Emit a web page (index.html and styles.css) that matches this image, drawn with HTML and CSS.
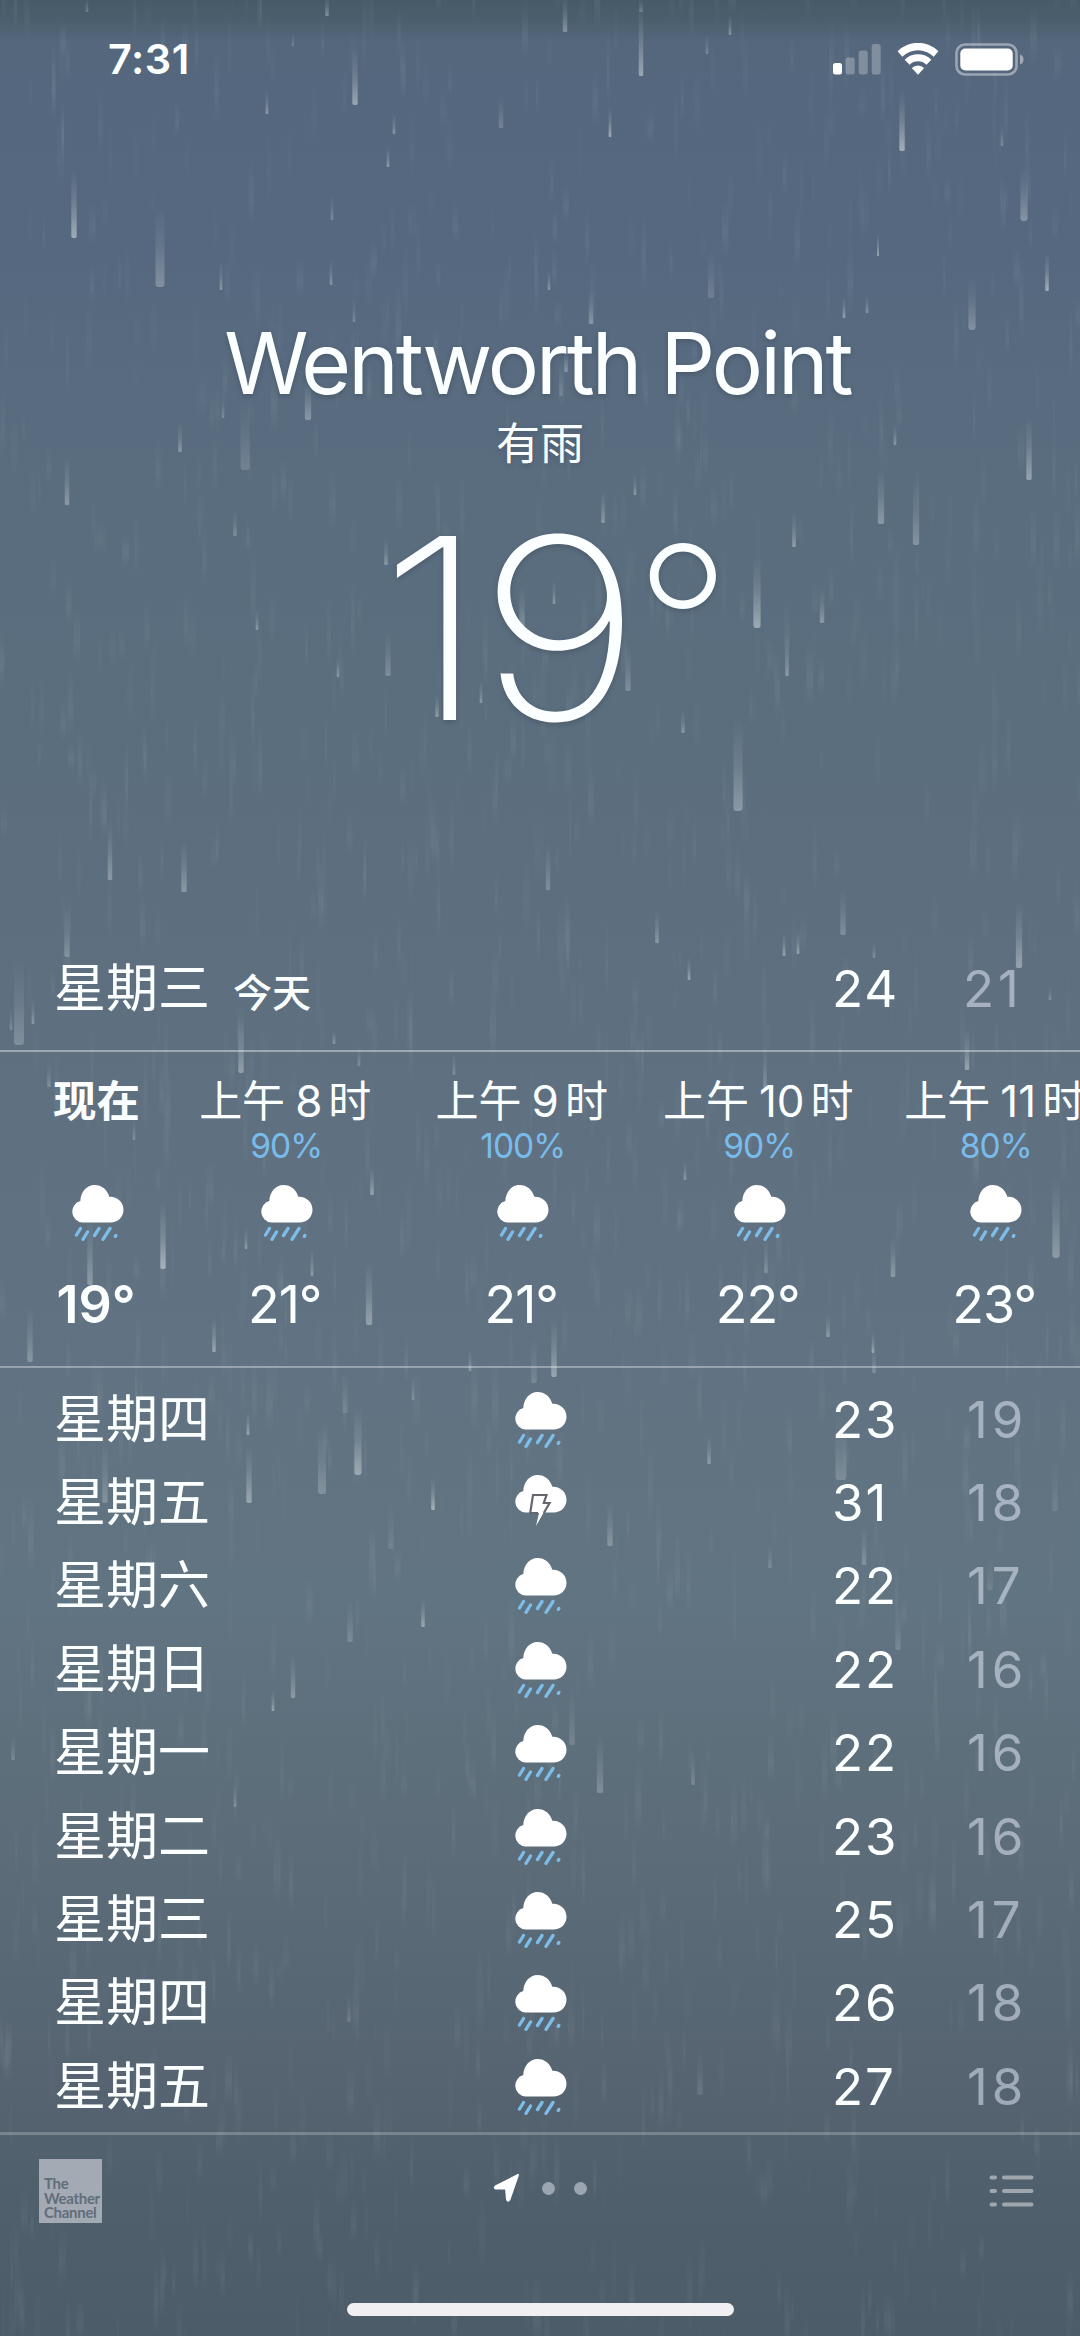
FILE: index.html
```html
<!DOCTYPE html>
<html lang="zh-CN">
<head>
<meta charset="utf-8">
<title>Wentworth Point</title>
<link rel="stylesheet" href="styles.css">
</head>
<body>
<svg class="defs" width="0" height="0" aria-hidden="true">
  <defs>
    <linearGradient id="streak" x1="0" y1="0" x2="0" y2="1">
      <stop offset="0" stop-color="#d0dade" stop-opacity="0"/>
      <stop offset=".5" stop-color="#d0dade" stop-opacity=".35"/>
      <stop offset="1" stop-color="#d0dade" stop-opacity="1"/>
    </linearGradient>
    <linearGradient id="mist" x1="0" y1="0" x2="0" y2="1">
      <stop offset="0" stop-color="#b4c4c8" stop-opacity="0"/>
      <stop offset=".6" stop-color="#b4c4c8" stop-opacity="1"/>
      <stop offset="1" stop-color="#b4c4c8" stop-opacity="0"/>
    </linearGradient>
    <g id="cloud">
      <path fill="#fff" d="M11.500 37.500A10.900 10.900 0 0 1 9.300 16.100C9.600 6.800 15.800 0 23.400 0C31 0 36.300 4.800 38.300 11.800C45.800 11.200 52.500 16.900 52.500 24.700C52.500 32 46.900 37.500 39.500 37.500Z"/>
    </g>
    <symbol id="rain" viewBox="0 0 53 56">
      <use href="#cloud"/>
      <g stroke="#7cbdea" stroke-width="3.300" stroke-linecap="round">
        <path d="M9.500 43.500L5.500 50M16.500 47L12 54.300M28 43.500L23.500 50.500M39 43.500L32 54.300M44.800 50.500L44.300 51.300"/>
      </g>
    </symbol>
    <symbol id="storm" viewBox="0 0 53 56">
      <use href="#cloud"/>
      <path fill="#fff" d="M19.500 20H32L29.500 28H35L22 51L25 38H16.500Z"/>
      <path fill="none" stroke="#66666f" stroke-width="2.200" d="M24 38H16.200L19 20H32.500L29.800 28H35.600L29.800 38"/>
    </symbol>
  </defs>
</svg>
<div class="screen">
  <svg class="rainfall" id="rainfall" viewBox="0 0 1080 2336" aria-hidden="true"></svg>

  <header class="status">
    <span class="clock">7:31</span>
    <div class="indicators">
      <svg class="signal" viewBox="0 0 48 32">
        <rect x="0" y="20" width="9" height="11.500" rx="2.500" fill="#fff"/>
        <g fill="#fff" fill-opacity=".26"><rect x="12.700" y="14.500" width="9" height="17" rx="2.500"/><rect x="25.700" y="7.500" width="9" height="24" rx="2.500"/><rect x="38.700" y="1" width="9" height="30.500" rx="2.500"/></g>
      </svg>
      <svg class="wifi" viewBox="0 0 42 32">
        <g fill="#fff">
          <path d="M.6 8.200A29 29 0 0 1 41.400 8.200L36.700 13.700A22.200 22.200 0 0 0 5.300 13.700Z"/>
          <path d="M7.700 16.700A18.800 18.800 0 0 1 34.300 16.700L29.500 21.700A12.200 12.200 0 0 0 12.500 21.700Z"/>
          <path d="M14.800 25A8.800 8.800 0 0 1 27.200 25L21 31.800Z"/>
        </g>
      </svg>
      <svg class="battery" viewBox="0 0 69 33">
        <rect x="1.500" y="1.500" width="60" height="30" rx="8.500" fill="none" stroke="#fff" stroke-opacity=".42" stroke-width="2.600"/>
        <rect x="5.300" y="5.500" width="52.400" height="22" rx="5" fill="#fff"/>
        <path d="M65 11.500Q68.500 12.500 68.500 16.500T65 21.500Z" fill="#fff" fill-opacity=".45"/>
      </svg>
    </div>
  </header>

  <section class="current">
    <h1 class="place">Wentworth Point</h1>
    <p class="condition">有雨</p>
    <p class="temperature"><span class="number">19</span><span class="unit">°</span></p>
  </section>

  <section class="today">
    <span class="day">星期三</span><span class="label">今天</span>
    <span class="high">24</span><span class="low">21</span>
  </section>

  <section class="hours">
    <div class="hour now"><span class="time">现在</span><span class="chance"></span><svg class="icon"><use href="#rain"/></svg><span class="degrees">19°</span></div>
    <div class="hour"><span class="time">上午<b>8</b>时</span><span class="chance">90%</span><svg class="icon"><use href="#rain"/></svg><span class="degrees">21°</span></div>
    <div class="hour"><span class="time">上午<b>9</b>时</span><span class="chance">100%</span><svg class="icon"><use href="#rain"/></svg><span class="degrees">21°</span></div>
    <div class="hour"><span class="time">上午<b>10</b>时</span><span class="chance">90%</span><svg class="icon"><use href="#rain"/></svg><span class="degrees">22°</span></div>
    <div class="hour"><span class="time">上午<b>11</b>时</span><span class="chance">80%</span><svg class="icon"><use href="#rain"/></svg><span class="degrees">23°</span></div>
  </section>

  <section class="days">
    <div class="row"><span class="day">星期四</span><svg class="icon"><use href="#rain"/></svg><span class="high">23</span><span class="low">19</span></div>
    <div class="row"><span class="day">星期五</span><svg class="icon"><use href="#storm"/></svg><span class="high">31</span><span class="low">18</span></div>
    <div class="row"><span class="day">星期六</span><svg class="icon"><use href="#rain"/></svg><span class="high">22</span><span class="low">17</span></div>
    <div class="row"><span class="day">星期日</span><svg class="icon"><use href="#rain"/></svg><span class="high">22</span><span class="low">16</span></div>
    <div class="row"><span class="day">星期一</span><svg class="icon"><use href="#rain"/></svg><span class="high">22</span><span class="low">16</span></div>
    <div class="row"><span class="day">星期二</span><svg class="icon"><use href="#rain"/></svg><span class="high">23</span><span class="low">16</span></div>
    <div class="row"><span class="day">星期三</span><svg class="icon"><use href="#rain"/></svg><span class="high">25</span><span class="low">17</span></div>
    <div class="row"><span class="day">星期四</span><svg class="icon"><use href="#rain"/></svg><span class="high">26</span><span class="low">18</span></div>
    <div class="row"><span class="day">星期五</span><svg class="icon"><use href="#rain"/></svg><span class="high">27</span><span class="low">18</span></div>
  </section>

  <footer class="toolbar">
    <div class="brand">The<br>Weather<br>Channel</div>
    <div class="pager">
      <svg class="arrow" viewBox="0 0 27 30"><path d="M25 2L2.500 13.500Q1 15 3 15.500H13L14 26.500Q15 29 16.500 26.500Z" fill="#fff" stroke="#fff" stroke-width="2" stroke-linejoin="round"/></svg>
      <i class="dot"></i><i class="dot"></i>
    </div>
    <svg class="list" viewBox="0 0 45 34"><g stroke="#fff" stroke-opacity=".45" stroke-width="4" stroke-linecap="round"><path d="M2.500 3.500h3.500M15 3.500h27.500M2.500 17h3.500M15 17h27.500M2.500 30.500h3.500M15 30.500h27.500"/></g></svg>
  </footer>
  <div class="home"></div>
</div>
<script src="rain.js"></script>
</body>
</html>
```
FILE: styles.css
```css
* { box-sizing: border-box; }
body, h1, p { margin: 0; font-weight: 400; }
body {
  width: 1080px;
  height: 2336px;
  overflow: hidden;
  color: #fcffff;
  font-family: Inter, "Noto Sans CJK SC", sans-serif;
}
.defs { position: absolute; }
.screen {
  position: relative;
  z-index: 0;
  display: flex;
  flex-direction: column;
  width: 1080px;
  height: 2336px;
  background: linear-gradient(#475a67 0, #4a5f6d 20px, #55677d 42px, #56687f 250px, #5a6d7f 480px, #5b6e7e 750px, #5e6f80 1000px, #617382 1380px, #617481 1600px, #5c6c79 1850px, #556470 2080px, #4f5f6b 2200px, #4c5c69 2336px);
}
.rainfall {
  position: absolute;
  inset: 0;
  z-index: -1;
  width: 1080px;
  height: 2336px;
}

.status {
  display: flex;
  justify-content: space-between;
  height: 122px;
  padding: 43px 56px 0 108px;
}
.clock { font-size: 41.500px; line-height: 32px; font-weight: 600; letter-spacing: .5px; }
.indicators { display: flex; gap: 16px; }
.signal { width: 48px; height: 32px; }
.wifi { width: 42px; height: 32px; }
.battery { width: 69px; height: 33px; }

.current {
  display: flex;
  flex-direction: column;
  align-items: center;
  height: 809px;
  padding-top: 191px;
  text-shadow: 0 2px 5px rgba(40, 50, 60, .3);
}
.place { margin-right: 5px; font-size: 85.500px; line-height: 100px; letter-spacing: -2.900px; white-space: nowrap; }
.condition { margin-top: 1px; font-size: 44px; line-height: 60px; }
.temperature {
  display: flex;
  margin: 26px 0 0 43px;
  line-height: 256px;
  font-weight: 200;
}
.number { font-size: 253px; letter-spacing: -6px; transform: scaleX(1.1); }
.unit { margin: -5px 0 0 11px; font-size: 215px; }

.today {
  display: flex;
  align-items: center;
  height: 121px;
  padding: 0 0 4px 54px;
  border-bottom: 2px solid rgba(255, 255, 255, .4);
}
.day { font-size: 52px; line-height: 60px; }
.label { margin: 2px 0 0 23px; font-size: 39px; font-weight: 500; }
.high, .low { font-size: 51px; letter-spacing: 2px; line-height: 60px; }
.high { margin-left: auto; }
.today .high { width: 131px; }
.low { width: 117px; letter-spacing: 4px; color: rgba(238, 242, 255, .5); }

.hours {
  display: flex;
  height: 316px;
  padding: 22px 0 0 27px;
  overflow: hidden;
  border-bottom: 2px solid rgba(255, 255, 255, .35);
}
.hour {
  display: flex;
  flex: 0 0 236.500px;
  flex-direction: column;
  align-items: center;
}
.hour.now { flex-basis: 141px; }
.time { margin-right: 2px; font-size: 43px; line-height: 54px; white-space: nowrap; }
.time b { margin: 0 6px 0 10px; font-size: 44px; font-weight: 400; }
.chance { height: 36px; font-size: 33.500px; line-height: 37px; letter-spacing: -1px; color: #79bcec; }
.icon { width: 53px; height: 56px; }
.hour .icon { margin-top: 21px; }
.degrees { margin: 34px 3px 0 0; font-size: 52px; line-height: 60px; letter-spacing: -1px; }
.now .time, .now .degrees { font-weight: 600; }
.now .time { font-size: 43.500px; }
.now .degrees { letter-spacing: 0; }

.days {
  display: flex;
  flex-direction: column;
  height: 767px;
  padding-top: 10px;
  border-bottom: 3px solid rgba(255, 255, 255, .22);
}
.row {
  display: grid;
  grid-template-columns: 460px 318px 135px 113px;
  align-items: center;
  height: 83.400px;
  padding-left: 54px;
}
.row .high { margin: 0; }
.row .low { width: auto; }

.toolbar {
  display: grid;
  grid-template-columns: 1fr auto 1fr;
  height: 167px;
  padding: 24px 46px 0 39px;
}
.brand {
  width: 63px;
  height: 64px;
  padding: 17px 0 0 5px;
  background: #a3aab4;
  color: #626d7a;
  font: 700 15px/14.700px Lato, sans-serif;
  letter-spacing: -.3px;
}
.pager { display: flex; align-items: center; height: 58px; gap: 19px; padding-left: 7px; }
.arrow { width: 27px; height: 30px; margin-right: 3px; }
.dot { width: 13px; height: 13px; border-radius: 50%; background: #9ba5b2; }
.list { justify-self: end; width: 45px; height: 34px; margin-top: 15px; }
.home {
  align-self: center;
  width: 387px;
  height: 13px;
  margin-top: 1px;
  border-radius: 7px;
  background: #f0f0f2;
}
```
FILE: rain.js
```js
// Foreground drops: x, bottom y, length, width, opacity
const drops = [
  [87,12,12,3,.3],[327,16,18,4,.4],[565,32,32,5,.4],[641,76,60,5,.55],[641,12,12,4,.3],[730,35,18,3,.4],[355,105,48,6,.55],
  [267,114,20,3,.45],[394,134,18,3,.4],[501,128,28,5,.25],[610,137,25,3,.6],[902,151,52,6,.6],[1002,146,18,3,.3],
  [388,167,18,3,.45],[74,238,58,6,.6],[160,287,70,10,.35],[1024,221,48,8,.4],[878,256,20,2,.6],[1047,291,33,4,.6],
  [221,290,24,3,.4],[331,285,22,3,.4],[332,220,22,3,.3],[549,290,17,3,.4],[711,298,42,7,.2],[707,54,17,3,.3],[293,46,12,2,.3],
  [972,330,45,8,.35],[867,313,15,3,.4],[844,318,18,3,.5],[591,324,28,5,.4],[354,322,20,3,.3],[308,420,36,7,.4],[245,470,60,10,.2],
  [223,418,18,3,.3],[566,372,20,4,.4],[561,396,28,4,.2],[881,524,48,7,.4],[895,445,18,3,.4],[794,547,30,4,.45],[603,523,28,4,.4],
  [635,495,17,3,.4],[386,565,22,4,.4],[235,536,22,4,.3],[757,628,62,8,.55],[822,623,30,5,.4],[787,676,38,4,.4],[388,676,40,6,.3],
  [628,691,42,6,.3],[554,604,20,3,.4],[522,632,38,6,.4],[257,630,18,3,.4],[338,677,18,3,.4],[437,717,20,4,.4],[481,703,20,3,.4],
  [683,733,20,4,.35],[738,811,80,10,.4],[67,505,42,5,.4],[1029,480,54,6,.5],[916,545,58,7,.35],[180,452,25,4,.4],
  [548,890,42,5,.3],[110,880,52,5,.4],[184,892,45,6,.4],[19,1045,75,11,.3],[67,957,45,6,.3],[33,1024,22,3,.4],[11,1030,18,3,.3],
  [241,1073,50,6,.45],[334,1044,12,3,.4],[359,1066,18,3,.3],[49,1087,22,4,.3],[134,1140,18,3,.3],[454,1075,20,3,.3],
  [372,1195,25,4,.5],[163,1269,58,6,.6],[90,1285,60,6,.4],[246,1249,18,3,.4],[312,1276,24,3,.4],[369,1325,55,7,.45],
  [214,1352,30,4,.5],[30,1362,48,6,.35],[470,1371,18,3,.4],[657,943,28,4,.4],[689,980,20,3,.5],[784,956,20,3,.5],[798,954,20,3,.5],
  [843,935,40,6,.3],[874,958,15,3,.3],[1019,968,58,7,.5],[1050,1000,12,3,.3],[967,1070,35,5,.5],[765,1088,40,4,.3],[685,1180,16,3,.4],
  [766,1273,30,4,.3],[893,1277,34,5,.4],[1056,1258,70,8,.4],[828,1337,20,4,.4],[873,1353,18,3,.5],[874,1373,22,4,.3],[554,1377,50,6,.5],
  [534,1383,40,6,.2],[248,1435,20,3,.5],[249,1503,50,6,.5],[322,1494,60,9,.3],[358,1475,58,8,.5],[105,1503,55,6,.3],[433,1510,28,4,.6],
  [413,1400,20,3,.3],[345,1413,38,6,.15],[423,1627,25,4,.5],[293,1698,38,5,.4],[273,1711,18,3,.5],[350,1642,35,6,.25],[391,1549,40,6,.15],
  [235,1807,20,3,.3],[349,2022,25,4,.2],[13,1760,20,4,.25],[709,1464,24,4,.4],[841,1480,55,12,.25],[610,1546,38,6,.35],
  [864,1565,35,5,.3],[1055,1511,45,6,.15],[770,1568,20,4,.25],[600,1793,50,7,.3],[693,1785,30,4,.25],[572,1745,50,6,.2],
  [898,1650,40,6,.2],[700,2095,45,6,.15],[990,1590,30,6,.15]
];

const layer = document.getElementById("rainfall");
const draw = (x, bottom, length, width, opacity, fill) => {
  const r = document.createElementNS("http://www.w3.org/2000/svg", "rect");
  const attrs = { x: x - width / 2, y: bottom - length, width, height: length, rx: width / 3, fill: `url(#${fill})`, opacity };
  for (const key in attrs) r.setAttribute(key, attrs[key]);
  layer.appendChild(r);
};

// Distant rain, from a fixed seed so that every load looks the same
let seed = 731;
const random = () => (seed = (seed * 16807) % 2147483647) / 2147483647;
for (let i = 0; i < 1500; i++) {
  draw(random() * 1080, random() * 2400, 30 + random() * 50, 2 + random() * 5, .02 + random() * .07, "mist");
}
for (const [x, bottom, length, width, opacity] of drops) {
  draw(x, bottom, length * 1.15, width * .9, opacity, "streak");
}
```
